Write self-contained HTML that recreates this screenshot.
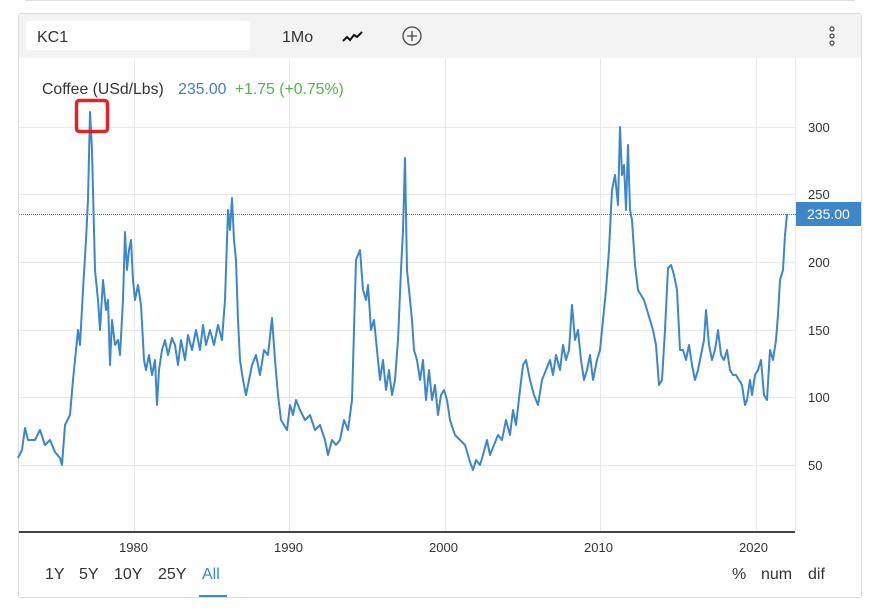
<!DOCTYPE html>
<html><head><meta charset="utf-8"><style>
body{margin:0;background:#fff;font-family:"Liberation Sans",sans-serif;}
.wrap{position:relative;width:881px;height:615px;overflow:hidden;}
.b{position:absolute;top:566px;font-size:16px;color:#333;white-space:nowrap}
</style></head><body><div class="wrap">
<div style="position:absolute;left:25px;top:0;width:830px;height:1px;background:#ddd"></div>
<div style="position:absolute;left:18px;top:13px;width:842px;height:583px;border:1px solid #ddd;border-radius:3px;background:#fff"></div>
<div style="position:absolute;left:19px;top:14px;width:842px;height:44px;background:#f3f3f3"></div>
<div style="position:absolute;left:26px;top:21px;width:224px;height:29px;background:#fff;border-radius:3px"></div>
<div style="position:absolute;left:37px;top:29px;font-size:16px;color:#333">KC1</div>
<div style="position:absolute;left:282px;top:29px;font-size:16px;color:#333">1Mo</div>
<svg style="position:absolute;left:340px;top:28px" width="26" height="18"><path d="M3 13 L7 9 L10 12 L14 7 L17 9 L22 4" fill="none" stroke="#111" stroke-width="2"/></svg>
<svg style="position:absolute;left:400px;top:25px" width="24" height="24"><circle cx="12" cy="11" r="9" fill="none" stroke="#444" stroke-width="1.3"/><path d="M12 6V16M7 11H17" stroke="#444" stroke-width="1.3"/></svg>
<svg style="position:absolute;left:826px;top:25px" width="12" height="24"><circle cx="6" cy="4" r="2" fill="none" stroke="#444" stroke-width="1.2"/><circle cx="6" cy="11" r="2" fill="none" stroke="#444" stroke-width="1.2"/><circle cx="6" cy="18" r="2" fill="none" stroke="#444" stroke-width="1.2"/></svg>
<svg style="position:absolute;left:0;top:0" width="881" height="615">
<g stroke="#e8e8e8" stroke-width="1">
<line x1="19" y1="127.5" x2="795" y2="127.5"/><line x1="19" y1="194.5" x2="795" y2="194.5"/><line x1="19" y1="262.5" x2="795" y2="262.5"/><line x1="19" y1="330.5" x2="795" y2="330.5"/><line x1="19" y1="397.5" x2="795" y2="397.5"/><line x1="19" y1="465.5" x2="795" y2="465.5"/>
<line x1="134.5" y1="58" x2="134.5" y2="532"/><line x1="289.5" y1="58" x2="289.5" y2="532"/><line x1="445.5" y1="58" x2="445.5" y2="532"/><line x1="600.5" y1="58" x2="600.5" y2="532"/><line x1="756.5" y1="58" x2="756.5" y2="532"/><line x1="795.5" y1="58" x2="795.5" y2="532"/>
</g>
<line x1="19" y1="214.5" x2="796" y2="214.5" stroke="#3d7fc0" stroke-width="1" stroke-dasharray="1,1"/>
<line x1="19" y1="532" x2="795" y2="532" stroke="#444" stroke-width="2"/>
<polyline fill="none" stroke="#3d87c9" stroke-width="2" stroke-linejoin="round" points="18,458 22,450 25,428 28,440 35,440 40,430 45,445 50,440 55,452 60,458 62,465 65,425 70,415 73,380 78,330 80,345 83,290 86,240 88,200 90,112 92,150 95,270 98,300 100,330 103,280 106,310 108,300 110,365 112,320 115,345 118,340 120,355 123,300 125,232 127,270 129,250 131,240 133,280 135,300 138,285 141,305 144,360 146,370 149,355 152,375 155,360 157,405 159,370 162,350 165,340 168,355 172,338 175,345 178,365 181,340 185,360 188,335 192,350 196,330 200,350 203,325 206,345 210,330 214,345 218,325 222,340 225,300 228,210 230,230 232,198 234,240 236,260 238,320 240,360 243,380 246,395 249,380 252,365 256,355 260,375 264,350 268,355 272,318 275,360 278,395 281,420 284,425 287,430 290,405 293,415 296,400 300,410 305,420 310,415 315,430 320,425 325,440 328,455 332,440 336,445 340,440 344,420 348,430 352,400 356,260 360,250 363,290 366,300 368,285 371,330 374,320 377,350 380,380 383,360 386,390 389,370 392,395 395,380 398,340 401,270 403,230 405,158 407,270 409,290 412,320 414,350 417,360 420,380 423,360 426,400 429,370 432,400 435,385 438,415 441,395 444,390 447,400 450,420 455,435 460,440 465,445 470,462 473,470 476,460 480,465 483,455 487,440 490,455 494,445 498,435 502,440 506,420 510,435 513,410 516,425 520,390 523,365 526,360 530,380 534,395 538,405 542,380 546,370 550,360 553,375 556,355 560,370 563,345 566,360 569,350 572,305 575,340 578,330 581,360 584,380 587,370 590,355 593,380 597,360 600,350 603,320 606,290 609,250 612,190 615,175 618,205 620,127 622,175 624,165 626,210 628,145 630,210 632,220 635,265 638,290 641,295 644,300 647,310 650,320 653,330 656,345 659,385 662,380 665,330 668,268 671,265 674,275 677,290 680,350 683,350 686,360 689,345 692,365 695,380 698,370 701,355 704,340 706,310 709,345 712,360 715,350 718,330 721,355 724,360 727,350 730,370 733,375 736,375 739,380 742,385 745,405 747,400 750,380 752,395 755,375 758,370 761,360 764,395 767,400 770,350 773,360 776,340 778,315 780,280 783,270 785,235 787,214"/>
<rect x="76.5" y="100.5" width="31" height="31" rx="3" fill="none" stroke="#e0232a" stroke-width="3.5"/>
<g font-family="Liberation Sans,sans-serif" font-size="13" fill="#333">
<text x="808" y="132">300</text><text x="808" y="199">250</text><text x="808" y="267">200</text><text x="808" y="335">150</text><text x="808" y="402">100</text><text x="808" y="470">50</text>
<text x="119" y="552">1980</text><text x="274" y="552">1990</text><text x="429" y="552">2000</text><text x="584" y="552">2010</text><text x="739" y="552">2020</text>
</g>
<rect x="796" y="202" width="65" height="24" fill="#3d87c9"/>
<text x="807" y="219" font-family="Liberation Sans,sans-serif" font-size="14" fill="#fff">235.00</text>
</svg>
<div style="position:absolute;left:42px;top:81px;font-size:15.8px;color:#333;white-space:nowrap">Coffee (USd/Lbs) <span style="color:#3d7fc0;margin-left:10px">235.00</span> <span style="color:#4cb848;margin-left:4px">+1.75 (+0.75%)</span></div>
<div class="b" style="left:45px">1Y</div>
<div class="b" style="left:79px">5Y</div>
<div class="b" style="left:114px">10Y</div>
<div class="b" style="left:158px">25Y</div>
<div class="b" style="left:202px;color:#3d87c9">All</div>
<div style="position:absolute;left:199px;top:595px;width:28px;height:2px;background:#3d87c9"></div>
<div class="b" style="left:732px">%</div>
<div class="b" style="left:761px">num</div>
<div class="b" style="left:808px">dif</div>
</div></body></html>
